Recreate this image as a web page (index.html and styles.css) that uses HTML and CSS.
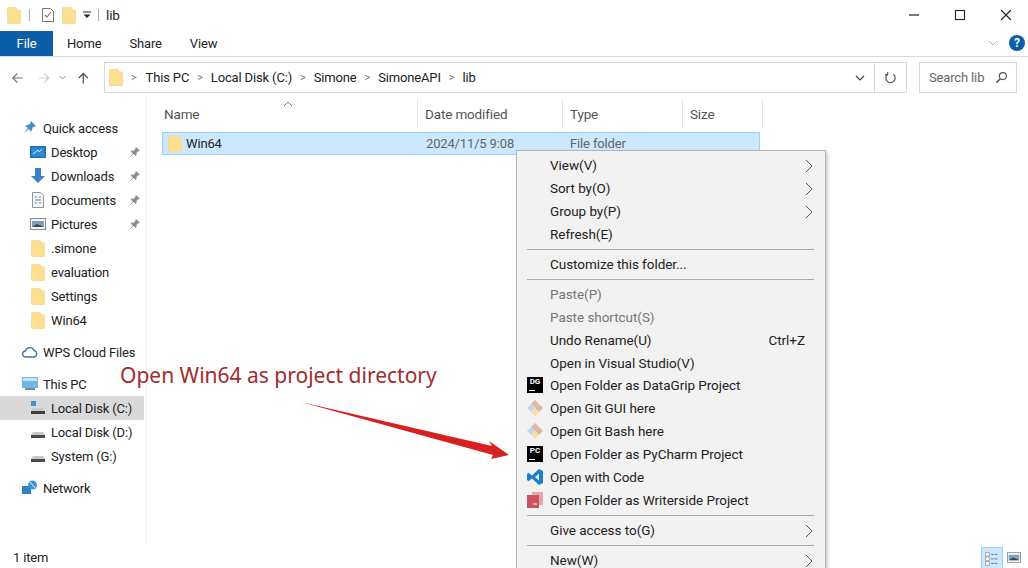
FILE: index.html
```html
<!DOCTYPE html>
<html>
<head>
    <title>lib</title>
    <meta name="viewport" content="width=device-width, initial-scale=1">
    <link rel="stylesheet" href="styles.css">
</head>
<body>
    <svg class="defs" width="0" height="0">
        <symbol id="folder" viewBox="0 0 14 17">
            <path d="M1.500 .5h7.500l1 1.500v1h3q.5 0 .5 .5V15.500q0 1-1 1H1.500q-1 0-1-1V1.500q0-1 1-1z" fill="#fde08f" stroke="#f6d39a" stroke-width=".8"/>
        </symbol>
        <symbol id="pin" viewBox="0 0 12 12">
            <path d="M7 1l4 4-1 .6-.8-.3L7.300 7.200l.2 2-1 .8-2-2.200L1.500 11 1 10.500 3.800 7.500 1.800 5.500l.8-1 2 .2 1.900-1.900-.2-.9z" fill="#8d8d8d"/>
        </symbol>
        <symbol id="drive" viewBox="0 0 16 16">
            <path d="M3 8h10l2 3H1z" fill="#c9c9c9"/>
            <rect x="1" y="11" width="14" height="3" fill="#4a4a4a"/>
        </symbol>
        <symbol id="chev" viewBox="0 0 8 16">
            <path d="M1 2l6 6-6 6" fill="none" stroke="#555" stroke-width="1"/>
        </symbol>
        <symbol id="gitdiamond" viewBox="0 0 18 18">
            <path d="M9 1l4 4-4 4-4-4z" fill="#e3b5a6"/>
            <path d="M5 5l4 4-4 4-4-4z" fill="#bcd8ee"/>
            <path d="M13 5l4 4-4 4-4-4z" fill="#d9b8a8"/>
            <path d="M9 9l4 4-4 4-4-4z" fill="#f7e09c"/>
        </symbol>
    </svg>

    <div class="window">
        <div class="titlebar">
            <svg class="fold"><use href="#folder"/></svg>
            <span class="tb-sep"></span>
            <svg class="ic16 qa-check" viewBox="0 0 16 16">
                <path d="M2.500 1.500h8l3 3v10h-11z" fill="#fff" stroke="#777"/>
                <path d="M5 8l2 2 4-5" fill="none" stroke="#b5524f" stroke-width="1.100"/>
            </svg>
            <svg class="fold qa-fold"><use href="#folder"/></svg>
            <svg class="qa-drop" viewBox="0 0 8 8"><path d="M0 1h8" stroke="#222"/><path d="M0.500 3.500h7L4 7z" fill="#222"/></svg>
            <span class="tb-sep"></span>
            <span class="title">lib</span>
            <div class="winbtns">
                <svg viewBox="0 0 12 12"><path d="M1 6h10" stroke="#222" stroke-width="1.200"/></svg>
                <svg viewBox="0 0 12 12"><rect x="1.500" y="1.500" width="9" height="9" fill="none" stroke="#222" stroke-width="1.100"/></svg>
                <svg viewBox="0 0 12 12"><path d="M1 1l10 10M11 1L1 11" stroke="#222" stroke-width="1.100"/></svg>
            </div>
        </div>

        <div class="ribbon">
            <div class="tab file">File</div>
            <div class="tab">Home</div>
            <div class="tab">Share</div>
            <div class="tab">View</div>
            <svg class="rib-chev" viewBox="0 0 10 6"><path d="M1 1l4 4 4-4" fill="none" stroke="#b5b5b5"/></svg>
            <div class="help">?</div>
        </div>

        <div class="addrrow">
            <div class="navbtns">
                <svg class="nav-arrow" viewBox="0 0 14 14"><path d="M13 7H2M7 2L2 7l5 5" fill="none" stroke="#777" stroke-width="1.300"/></svg>
                <svg class="nav-arrow" viewBox="0 0 14 14"><path d="M1 7h11M7 2l5 5-5 5" fill="none" stroke="#cfcfcf" stroke-width="1.300"/></svg>
                <svg class="nav-drop" viewBox="0 0 8 5"><path d="M1 1l3 3 3-3" fill="none" stroke="#777"/></svg>
                <svg class="nav-arrow" viewBox="0 0 14 14"><path d="M7 13V2M2 7l5-5 5 5" fill="none" stroke="#555" stroke-width="1.400"/></svg>
            </div>
            <div class="addrbar">
                <svg class="fold addr-folder"><use href="#folder"/></svg>
                <div class="crumbs">
                    <span class="sep">&gt;</span><span>This PC</span>
                    <span class="sep">&gt;</span><span>Local Disk (C:)</span>
                    <span class="sep">&gt;</span><span>Simone</span>
                    <span class="sep">&gt;</span><span>SimoneAPI</span>
                    <span class="sep">&gt;</span><span>lib</span>
                </div>
                <svg class="addr-drop" viewBox="0 0 10 6"><path d="M1 1l4 4 4-4" fill="none" stroke="#444" stroke-width="1.200"/></svg>
                <div class="refresh">
                    <svg viewBox="0 0 14 14"><path d="M4 3.500a5 5 0 1 0 6 0M4 1v3H1" fill="none" stroke="#555" stroke-width="1.300"/></svg>
                </div>
            </div>
            <div class="search">
                <span>Search lib</span>
                <svg viewBox="0 0 14 14"><circle cx="8.500" cy="5.500" r="3.800" fill="none" stroke="#555" stroke-width="1.200"/><path d="M5.800 8.300L1.500 12.500" stroke="#555" stroke-width="1.600"/></svg>
            </div>
        </div>

        <div class="main">
            <nav class="sidebar">
                <div class="nav-row top">
                    <svg class="ic16" viewBox="0 0 16 16"><path d="M9 1l5 5-3 1-2 5-2-3-5 4 4-5-3-2 5-2z" fill="#4a8cc2"/></svg>
                    <span>Quick access</span>
                </div>
                <div class="nav-row">
                    <svg class="ic16" viewBox="0 0 16 16"><rect x="0" y="2" width="16" height="12" fill="#1f6fb5"/><rect x="1.500" y="3.500" width="13" height="9" fill="#2e89cf"/><path d="M3 10l5-4 1 2 3-3" stroke="#cfe6f7" fill="none"/></svg>
                    <span>Desktop</span>
                    <svg class="pin"><use href="#pin"/></svg>
                </div>
                <div class="nav-row">
                    <svg class="ic16" viewBox="0 0 16 16"><path d="M5 0h6v8h4l-7 7-7-7h4z" fill="#3b82c4"/></svg>
                    <span>Downloads</span>
                    <svg class="pin"><use href="#pin"/></svg>
                </div>
                <div class="nav-row">
                    <svg class="ic16" viewBox="0 0 16 16"><path d="M2.500 .5h8l3 3v12h-11z" fill="#f4f6f8" stroke="#8a96a0"/><path d="M5 5h2M9 5h2M5 8h6M5 11h2M9 11h2" stroke="#6c8193"/></svg>
                    <span>Documents</span>
                    <svg class="pin"><use href="#pin"/></svg>
                </div>
                <div class="nav-row">
                    <svg class="ic16" viewBox="0 0 16 16"><rect x=".5" y="2.500" width="15" height="11" fill="#f2f4f6" stroke="#8c8c8c"/><rect x="2" y="5" width="12" height="6" fill="#7f9fb8"/><path d="M2 11l5-3 7 3z" fill="#3a4650"/></svg>
                    <span>Pictures</span>
                    <svg class="pin"><use href="#pin"/></svg>
                </div>
                <div class="nav-row"><svg class="fold"><use href="#folder"/></svg><span>.simone</span></div>
                <div class="nav-row"><svg class="fold"><use href="#folder"/></svg><span>evaluation</span></div>
                <div class="nav-row"><svg class="fold"><use href="#folder"/></svg><span>Settings</span></div>
                <div class="nav-row"><svg class="fold"><use href="#folder"/></svg><span>Win64</span></div>

                <div class="nav-row top gap">
                    <svg class="ic16" viewBox="0 0 16 16"><path d="M4 13a3 3 0 0 1-.5-6A4.500 4.500 0 0 1 12 6.500 3.300 3.300 0 0 1 12 13z" fill="none" stroke="#3f78a8" stroke-width="1.300"/></svg>
                    <span>WPS Cloud Files</span>
                </div>
                <div class="nav-row top gap">
                    <svg class="ic16" viewBox="0 0 16 16"><rect x="0" y="1" width="16" height="11" fill="#6fb7e4"/><rect x="1" y="2" width="14" height="3" fill="#c7e5f6"/><rect x="3" y="12" width="10" height="2" fill="#7d8a94"/></svg>
                    <span>This PC</span>
                </div>
                <div class="nav-row active">
                    <svg class="ic16" viewBox="0 0 16 16"><rect x="1" y="1" width="5" height="5" fill="#3f94d2"/><path d="M3 8h10l2 3H1z" fill="#c9c9c9"/><rect x="1" y="11" width="14" height="3" fill="#3f3f3f"/></svg>
                    <span>Local Disk (C:)</span>
                </div>
                <div class="nav-row"><svg class="ic16"><use href="#drive"/></svg><span>Local Disk (D:)</span></div>
                <div class="nav-row"><svg class="ic16"><use href="#drive"/></svg><span>System (G:)</span></div>
                <div class="nav-row top gap">
                    <svg class="ic16" viewBox="0 0 16 16"><rect x="0" y="6" width="9" height="8" fill="#2f7fc1"/><circle cx="10.500" cy="5" r="4.500" fill="#3d95d6"/><path d="M8 2l5 6" stroke="#e8f3fa"/></svg>
                    <span>Network</span>
                </div>
            </nav>

            <section class="files">
                <div class="cols">
                    <div class="col name">Name<svg class="sort" viewBox="0 0 10 6"><path d="M1 5l4-4 4 4" fill="none" stroke="#777"/></svg></div>
                    <div class="col date">Date modified</div>
                    <div class="col type">Type</div>
                    <div class="col size">Size</div>
                </div>
                <div class="filerow">
                    <div class="col name"><svg class="fold"><use href="#folder"/></svg><span>Win64</span></div>
                    <div class="col date">2024/11/5 9:08</div>
                    <div class="col type">File folder</div>
                </div>
            </section>
        </div>

        <div class="status">
            <span>1 item</span>
            <div class="views">
                <svg class="view on" viewBox="0 0 22 22"><path d="M4 5h4v4H4zM4 10h4v4H4zM4 15h4v4H4z" fill="#fff" stroke="#8a8a8a" stroke-width=".8"/><path d="M10 7h8M10 12h8M10 17h8" stroke="#5c6f80" stroke-dasharray="3 1"/></svg>
                <svg class="view" viewBox="0 0 16 12"><rect x=".5" y=".5" width="15" height="11" fill="#f2f4f6" stroke="#8c8c8c"/><rect x="2" y="3" width="12" height="6" fill="#7f9fb8"/><path d="M2 9l5-3 7 3z" fill="#3a4650"/></svg>
            </div>
        </div>
    </div>

    <div class="note">Open Win64 as project directory</div>
    <svg class="arrow" viewBox="0 0 220 60" width="220" height="60">
        <path d="M1 1L192 45 189 40 209 54 191 58 193 54z" fill="#d92020"/>
    </svg>

    <div class="menu">
        <div class="mi">View(V)<svg class="more"><use href="#chev"/></svg></div>
        <div class="mi">Sort by(O)<svg class="more"><use href="#chev"/></svg></div>
        <div class="mi">Group by(P)<svg class="more"><use href="#chev"/></svg></div>
        <div class="mi">Refresh(E)</div>
        <div class="msep"></div>
        <div class="mi">Customize this folder...</div>
        <div class="msep"></div>
        <div class="mi off">Paste(P)</div>
        <div class="mi off">Paste shortcut(S)</div>
        <div class="mi">Undo Rename(U)<span class="keys">Ctrl+Z</span></div>
        <div class="mi">Open in Visual Studio(V)</div>
        <div class="mi">
            <span class="jb">DG</span>Open Folder as DataGrip Project
        </div>
        <div class="mi"><svg class="mi-ic"><use href="#gitdiamond"/></svg>Open Git GUI here</div>
        <div class="mi"><svg class="mi-ic"><use href="#gitdiamond"/></svg>Open Git Bash here</div>
        <div class="mi">
            <span class="jb">PC</span>Open Folder as PyCharm Project
        </div>
        <div class="mi">
            <svg class="mi-ic" viewBox="0 0 18 18"><path d="M13 1l4 2v12l-4 2-7-6.500-3.500 2.700L1 12V6l1.500-1.200L6 7.500zM13 5.500L9 9l4 3.500z" fill="#1f7fc9"/></svg>
            Open with Code
        </div>
        <div class="mi">
            <svg class="mi-ic" viewBox="0 0 18 18"><rect x="6" y="1" width="11" height="13" fill="#e9a6ad"/><rect x="1" y="4" width="12" height="13" fill="#c9565f"/><path d="M7 13h4" stroke="#fff"/></svg>
            Open Folder as Writerside Project
        </div>
        <div class="msep"></div>
        <div class="mi">Give access to(G)<svg class="more"><use href="#chev"/></svg></div>
        <div class="msep"></div>
        <div class="mi">New(W)<svg class="more"><use href="#chev"/></svg></div>
    </div>
</body>
</html>
```

FILE: styles.css
```css
html, body {
    margin: 0;
    height: 100%;
    overflow: hidden;
}

body {
    position: relative;
    background-color: #fff;
    color: #222;
    font-family: Roboto, Arial, sans-serif;
    font-size: 13px;
    letter-spacing: -0.15px;
}

.defs {
    position: absolute;
}

.ic16 {
    width: 16px;
    height: 16px;
    flex: none;
}

.fold {
    width: 14px;
    height: 17px;
    flex: none;
}

.window {
    height: 568px;
    display: flex;
    flex-direction: column;
}

/* title bar */
.titlebar {
    height: 30px;
    flex: none;
    display: flex;
    align-items: center;
    padding-left: 7px;
    box-sizing: border-box;
}

.tb-sep {
    width: 1px;
    height: 12px;
    background: #aaa;
    margin: 0 10px 0 8px;
}

.qa-fold {
    margin-left: 6px;
}

.qa-drop {
    width: 8px;
    height: 8px;
    margin-left: 7px;
}

.qa-drop + .tb-sep {
    margin: 0 7px 0 7px;
}

.title {
    font-size: 13.5px;
}

.winbtns {
    margin-left: auto;
    display: flex;
    gap: 34px;
    padding-right: 16px;
}

.winbtns svg {
    width: 12px;
    height: 12px;
}

/* ribbon tabs */
.ribbon {
    height: 27px;
    flex: none;
    display: flex;
    align-items: center;
    border-bottom: 1px solid #dadada;
    box-sizing: border-box;
    padding-right: 3px;
}

.tab {
    padding: 0 14px;
    line-height: 25px;
}

.tab.file {
    width: 53px;
    box-sizing: border-box;
    padding: 0;
    text-align: center;
    background: #0c5ea8;
    color: #fff;
}

.rib-chev {
    width: 10px;
    height: 6px;
    margin-left: auto;
    margin-right: 11px;
}

.help {
    width: 16px;
    height: 16px;
    border-radius: 50%;
    background: #0c5ea8;
    color: #fff;
    font-weight: bold;
    font-size: 12px;
    line-height: 16px;
    text-align: center;
}

/* address row */
.addrrow {
    height: 41px;
    flex: none;
    display: flex;
    align-items: center;
    padding: 0 9px 0 11px;
    box-sizing: border-box;
}

.navbtns {
    display: flex;
    align-items: center;
    width: 93px;
    flex: none;
}

.nav-arrow {
    width: 14px;
    height: 14px;
    margin-right: 14px;
}

.nav-arrow:nth-child(2) {
    margin-right: 9px;
}

.nav-drop {
    width: 8px;
    height: 5px;
    margin-right: 11px;
}

.addrbar {
    width: 803px;
    height: 31px;
    flex: none;
    display: flex;
    align-items: center;
    border: 1px solid #d9d9d9;
    box-sizing: border-box;
}

.addr-folder {
    margin-left: 4px;
}

.crumbs {
    display: flex;
    align-items: center;
    margin-left: 5px;
}

.crumbs .sep {
    color: #777;
    font-size: 11px;
    margin: 0 8px;
}

.crumbs .sep:first-child {
    margin-left: 3px;
    margin-right: 9px;
}

.addr-drop {
    width: 10px;
    height: 6px;
    margin-left: auto;
    margin-right: 9px;
}

.refresh {
    width: 31px;
    height: 100%;
    border-left: 1px solid #d9d9d9;
    display: flex;
    align-items: center;
    justify-content: center;
}

.refresh svg {
    width: 13px;
    height: 13px;
}

.search {
    width: 98px;
    height: 31px;
    flex: none;
    margin-left: 12px;
    border: 1px solid #d9d9d9;
    box-sizing: border-box;
    display: flex;
    align-items: center;
    justify-content: space-between;
    padding: 0 8px 0 9px;
    color: #666;
}

.search svg {
    width: 13px;
    height: 13px;
}

/* main area */
.main {
    flex: 1;
    display: flex;
    min-height: 0;
}

.sidebar {
    width: 147px;
    flex: none;
    border-right: 1px solid #f0f0f0;
    box-sizing: border-box;
    padding-top: 18px;
}

.nav-row {
    height: 24px;
    display: flex;
    align-items: center;
    gap: 5px;
    padding-left: 30px;
    position: relative;
}

.nav-row .fold {
    margin: 0 1px;
}

.nav-row.top {
    padding-left: 22px;
}

.nav-row.gap {
    margin-top: 8px;
}

.nav-row.active {
    background: #d9d9d9;
    width: 144px;
    box-sizing: border-box;
}

.pin {
    width: 12px;
    height: 12px;
    position: absolute;
    left: 129px;
    top: 6px;
}

.files {
    flex: 1;
    min-width: 0;
}

.cols {
    display: flex;
    height: 29px;
    margin-left: 16px;
    color: #555;
    font-size: 13.5px;
    margin-top: 1px;
    margin-bottom: 4px;
}

.col {
    box-sizing: border-box;
    display: flex;
    align-items: center;
    position: relative;
}

.col.name {
    width: 255px;
}

.col.date {
    width: 145px;
}

.col.type {
    width: 120px;
}

.col.size {
    width: 80px;
}

.cols .col {
    border-right: 1px solid #e5e5e5;
    padding-left: 1px;
}

.cols .date, .cols .type, .cols .size {
    padding-left: 7px;
}

.sort {
    width: 10px;
    height: 6px;
    position: absolute;
    left: 120px;
    top: 2px;
}

.filerow {
    display: flex;
    height: 23px;
    width: 598px;
    margin-left: 15px;
    margin-top: 1px;
    background: #cce8ff;
    border: 1px solid #99d1ff;
    box-sizing: border-box;
    color: #666;
}

.filerow .name {
    width: 256px;
    gap: 4px;
    color: #222;
    padding-left: 5px;
}

.filerow .date {
    padding-left: 7px;
}

.filerow .type {
    padding-left: 6px;
}

.status {
    height: 23px;
    flex: none;
    display: flex;
    align-items: center;
    justify-content: space-between;
    padding: 2px 7px 0 13px;
    box-sizing: border-box;
}

.views {
    display: flex;
    align-items: center;
    gap: 4px;
}

.view {
    width: 14px;
    height: 11px;
}

.view.on {
    width: 22px;
    height: 22px;
    background: #cce8ff;
    border: 1px solid #99d1ff;
    box-sizing: border-box;
}

/* things lying over the window */
.note {
    position: absolute;
    left: 120px;
    top: 360px;
    color: #a02b30;
    font-family: "Noto Sans", Arial, sans-serif;
    font-size: 21px;
    line-height: 30px;
    letter-spacing: 0;
}

.arrow {
    position: absolute;
    left: 300px;
    top: 401px;
}

.menu {
    position: absolute;
    left: 516px;
    top: 150px;
    width: 310px;
    box-sizing: border-box;
    padding: 3px 2px;
    background: #f2f2f2;
    border: 1px solid #b5b5b5;
    box-shadow: 2px 2px 3px rgba(0, 0, 0, .2);
    font-size: 13.5px;
    letter-spacing: -0.05px;
}

.mi {
    height: 22.95px;
    line-height: 23px;
    padding-left: 31px;
    position: relative;
}

.mi.off {
    color: #777;
}

.msep {
    height: 1px;
    margin: 3px 9px 3px 8px;
    background: #a9a9a9;
}

.more {
    position: absolute;
    right: 10px;
    top: 4px;
    width: 8px;
    height: 16px;
}

.keys {
    position: absolute;
    right: 18px;
}

.mi-ic {
    position: absolute;
    left: 7px;
    top: 2px;
    width: 18px;
    height: 18px;
}

.jb {
    position: absolute;
    left: 8px;
    top: 3px;
    width: 16px;
    height: 16px;
    background: #000;
    color: #fff;
    font-size: 8px;
    line-height: 10px;
    font-weight: bold;
    text-align: center;
    box-sizing: border-box;
}

.jb::after {
    content: "";
    position: absolute;
    left: 2px;
    bottom: 2px;
    width: 6px;
    height: 1px;
    background: #fff;
}
```
